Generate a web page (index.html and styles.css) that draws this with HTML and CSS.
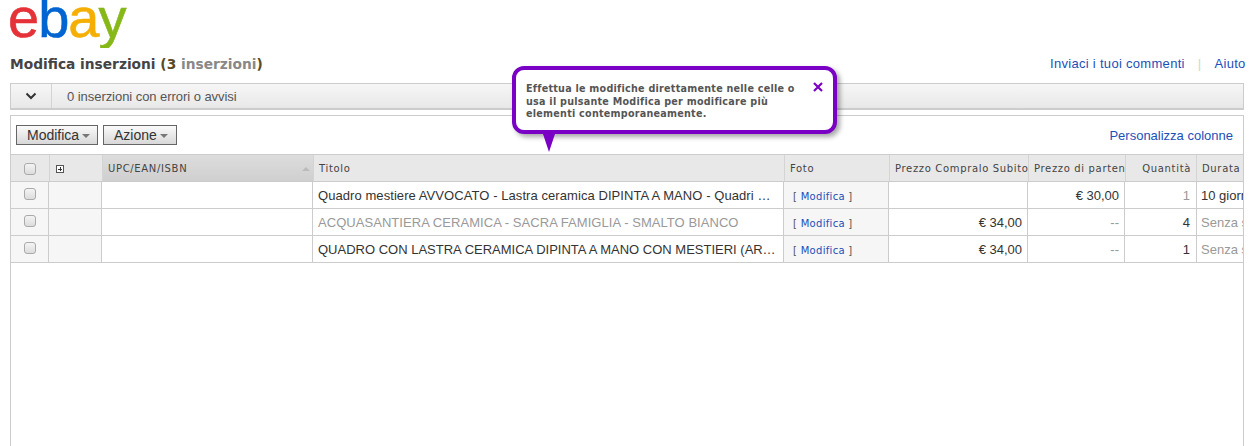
FILE: index.html
```html
<!DOCTYPE html>
<html lang="it">
<head>
<meta charset="utf-8">
<title>Modifica inserzioni</title>
<link rel="stylesheet" href="styles.css">
</head>
<body>
<div class="logo"><span class="l-e">e</span><span class="l-b">b</span><span class="l-a">a</span><span class="l-y">y</span></div>
<div class="titlebar">
  <h1>Modifica inserzioni <span class="par">(3 <span class="muted">inserzioni</span>)</span></h1>
  <div class="toplinks"><a href="#">Inviaci i tuoi commenti</a><span class="sep">|</span><a href="#">Aiuto</a></div>
</div>
<div class="errbar">
  <div class="chev"><svg width="12" height="8" viewBox="0 0 12 8"><path d="M1.5 1.5 6 6l4.5-4.5" fill="none" stroke="#333" stroke-width="2"/></svg></div>
  <div class="errtext">0 inserzioni con errori o avvisi</div>
</div>
<div class="panel">
  <div class="tools">
    <button class="btn btn-m">Modifica<i class="caret"></i></button>
    <button class="btn btn-a">Azione<i class="caret"></i></button>
    <a class="custom" href="#">Personalizza colonne</a>
  </div>
  <div class="head">
    <div class="hc h1"><i class="cb"></i></div>
    <div class="hc h2"><i class="plus"></i></div>
    <div class="hc h3 sorted">UPC/EAN/ISBN<i class="sort"></i></div>
    <div class="hc h4">Titolo</div>
    <div class="hc h5">Foto</div>
    <div class="hc h6">Prezzo Compralo Subito</div>
    <div class="hc h7">Prezzo di partenza</div>
    <div class="hc h8 right">Quantità</div>
    <div class="hc h9">Durata</div>
  </div>
  <div class="row">
    <div class="c c1 alt"><i class="cb"></i></div><div class="c c2 alt"></div><div class="c c3"></div>
    <div class="c c4"><span class="ell wide">Quadro mestiere AVVOCATO - Lastra ceramica DIPINTA A MANO - Quadri professioni</span></div>
    <div class="c c5 alt"><span class="edit">[ <a href="#">Modifica</a> ]</span></div>
    <div class="c c6 right"></div><div class="c c7 right">€ 30,00</div><div class="c c8 right dim">1</div><div class="c c9">10 giorni</div>
  </div>
  <div class="row">
    <div class="c c1 alt"><i class="cb"></i></div><div class="c c2 alt"></div><div class="c c3"></div>
    <div class="c c4 dim"><span class="ell">ACQUASANTIERA CERAMICA - SACRA FAMIGLIA - SMALTO BIANCO</span></div>
    <div class="c c5 alt"><span class="edit">[ <a href="#">Modifica</a> ]</span></div>
    <div class="c c6 right">€ 34,00</div><div class="c c7 right dim">--</div><div class="c c8 right">4</div><div class="c c9 dim">Senza scadenza</div>
  </div>
  <div class="row">
    <div class="c c1 alt"><i class="cb"></i></div><div class="c c2 alt"></div><div class="c c3"></div>
    <div class="c c4"><span class="ell tight">QUADRO CON LASTRA CERAMICA DIPINTA A MANO CON MESTIERI (ARTI E PROFESSIONI)</span></div>
    <div class="c c5 alt"><span class="edit">[ <a href="#">Modifica</a> ]</span></div>
    <div class="c c6 right">€ 34,00</div><div class="c c7 right dim">--</div><div class="c c8 right">1</div><div class="c c9 dim">Senza scadenza</div>
  </div>
</div>
<div class="tip">
  <p>Effettua le modifiche direttamente nelle celle o usa il pulsante Modifica per modificare più elementi contemporaneamente.</p>
  <svg class="close" width="10" height="10" viewBox="0 0 10 10"><path d="M1 1l8 8M9 1l-8 8" stroke="#7a00c5" stroke-width="2.2" fill="none"/></svg>
  <i class="arrow"></i>
</div>
</body>
</html>
```
FILE: styles.css
```css
* { box-sizing: border-box; }
html, body { margin: 0; height: 446px; overflow: hidden; background: #fff; }
body { font-family: "Liberation Sans", Arial, sans-serif; font-size: 13px; color: #333; position: relative; }
a { color: #1c4fb8; text-decoration: none; }

.logo { height: 48px; margin-left: 8px; overflow: hidden; font-size: 56px; line-height: 48px; letter-spacing: -1px; white-space: nowrap; -webkit-text-stroke: .6px; }
.logo span { display: inline-block; position: relative; top: -6px; }
.l-e { color: #e53238; }
.l-b { color: #0064d2; }
.l-a { color: #f5af02; }
.l-y { color: #86b817; }

.titlebar { display: flex; justify-content: space-between; align-items: flex-start; height: 35px; padding: 7px 0 0 10px; }
h1 { margin: 0; font: bold 13.75px/18px "DejaVu Sans", Verdana, sans-serif; color: #444; }
.par { color: #5a4a20; }
.muted { color: #888; }
.toplinks { font-size: 13px; letter-spacing: .3px; line-height: 18px; width: 203px; flex: none; white-space: nowrap; }
.sep { color: #c5dcc5; margin: 0 13px; }

.errbar { display: flex; height: 27px; margin: 0 9px 0 10px; border: 1px solid #ccc; border-bottom-width: 2px; background: linear-gradient(#f6f6f6, #e8e8e8); }
.chev { width: 41px; border-right: 1px solid #d4d4d4; display: flex; align-items: center; justify-content: center; }
.errtext { padding-left: 15px; line-height: 26px; color: #555; font-size: 13px; letter-spacing: -.05px; }

.panel { height: 340px; margin: 5px 9px 0 10px; border: 1px solid #ccc; overflow: hidden; }
.tools { display: flex; align-items: flex-start; height: 38px; padding: 9px 10px 0 5px; gap: 5px; }
.btn { height: 20px; padding: 0 0 0 10px; border: 1px solid #666; background: linear-gradient(#fafafa, #d8d8d8); font: 14px/18px "Liberation Sans", Arial, sans-serif; color: #333; text-align: left; }
.btn-m { width: 82px; }
.btn-a { width: 74px; }
.caret { display: inline-block; margin-left: 3px; vertical-align: 2px; border: 4px solid transparent; border-top-color: #777; border-bottom: 0; }
.custom { margin-left: auto; font-size: 13px; line-height: 22px; }

.head { display: flex; height: 28px; width: 1300px; background: #e8e8e8; border-top: 1px solid #ccc; border-bottom: 1px solid #ccc; }
.hc { flex: none; border-right: 1px solid #d4d4d4; font: 10px/27px "DejaVu Sans", Verdana, sans-serif; letter-spacing: .66px; color: #444; padding: 0 5px; overflow: hidden; white-space: nowrap; position: relative; }
.hc.right { text-align: right; }
.h1 { width: 39px; padding: 8px 0 0 13px; }
.h2 { width: 53px; padding: 10px 0 0 6px; }
.h3 { width: 211px; }
.h4 { width: 471px; }
.h5 { width: 105px; }
.h6 { width: 139px; padding-right: 0; }
.h7 { width: 97px; padding-right: 0; }
.h8 { width: 71px; }
.h9 { width: 100px; }
.sorted { background: linear-gradient(#dcdcdc, #cfcfcf); }
.sort { position: absolute; right: 3px; top: 12px; border: 4px solid transparent; border-top: 0; border-bottom: 4px solid #bbb; }

.cb { display: block; width: 12px; height: 12px; border: 1px solid #aaa; border-radius: 3px; background: linear-gradient(#f4f4f4, #dcdcdc); }
.plus { display: block; width: 8px; height: 8px; border: 1px solid #555; background: linear-gradient(#333,#333) center/4px 1px no-repeat, linear-gradient(#333,#333) center/1px 4px no-repeat, #fff; }

.row { display: flex; height: 27px; width: 1300px; border-bottom: 1px solid #ccc; }
.c { flex: none; border-right: 1px solid #ccc; font-size: 13px; line-height: 27px; color: #333; padding: 0 5px; overflow: hidden; white-space: nowrap; }
.c.right { text-align: right; }
.c.dim { color: #999; }
.alt { background: #f6f6f6; }
.c1 { width: 38px; padding: 6px 0 0 13px; }
.c2 { width: 53px; }
.c3 { width: 211px; }
.c4 { width: 471px; letter-spacing: .05px; }
.c5 { width: 105px; padding-left: 9px; }
.c6 { width: 139px; }
.c7 { width: 97px; }
.c8 { width: 72px; padding-right: 6px; }
.c9 { width: 100px; padding-left: 4px; }
.ell { display: block; overflow: hidden; text-overflow: ellipsis; }
.ell.wide { letter-spacing: .07px; padding-right: 1px; }
.ell.tight { letter-spacing: 0; }
.edit { font: 10px "DejaVu Sans", Verdana, sans-serif; letter-spacing: .3px; color: #555; }

.tip { position: absolute; left: 512px; top: 66px; width: 325px; height: 68px; padding: 13px 30px 0 10px; background: #fff; border: 4px solid #7a00c5; border-radius: 12px; box-shadow: 3px 3px 5px rgba(0,0,0,.35); }
.tip p { margin: 0; font: bold 9.6px/12.5px "DejaVu Sans", Verdana, sans-serif; letter-spacing: .25px; color: #555; }
.close { position: absolute; right: 10px; top: 12px; }
.arrow { position: absolute; left: 27px; top: 64px; border: 6px solid transparent; border-top: 18px solid #7a00c5; border-bottom: 0; }
```
